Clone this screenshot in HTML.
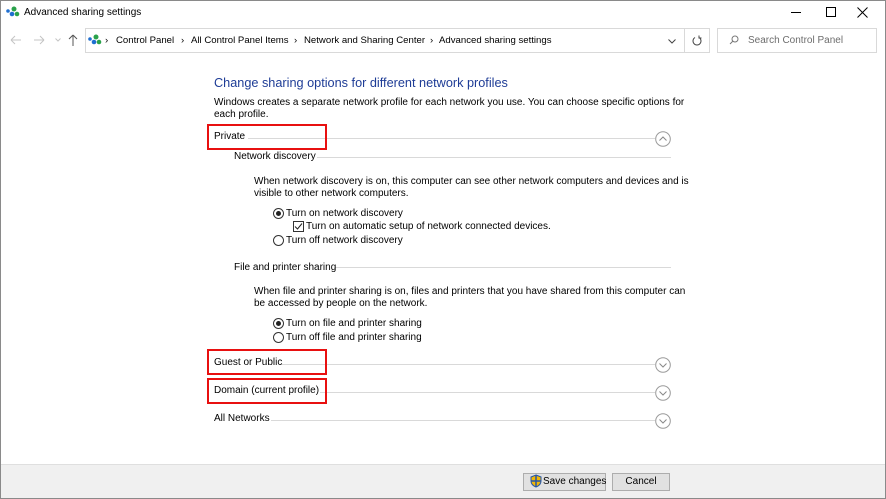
<!DOCTYPE html>
<html><head><meta charset="utf-8"><style>
*{margin:0;padding:0;box-sizing:border-box}
body{width:886px;height:499px;overflow:hidden;background:#fff;font-family:"Liberation Sans",sans-serif;font-size:10px;color:#000;position:relative}
.a{position:absolute;white-space:nowrap;line-height:12px}
.ln{position:absolute;height:1px;background:#d9d9d9}
.rb{position:absolute;border:2px solid #e81010}
.rad{position:absolute;width:11px;height:11px;border:1px solid #333;border-radius:50%;background:#fff}
.btn{position:absolute;height:18px;border:1px solid #adadad;background:#e1e1e1;text-align:center;line-height:16px}
.cv{position:absolute}
.bc{font-size:9.6px}
</style></head><body>
<div style="position:absolute;inset:0;border:1px solid #8a8a8a;pointer-events:none;z-index:5"></div>
<svg class="a" style="left:6px;top:6px" width="14" height="12"><circle cx="2" cy="5" r="1.8" fill="#1f6fd0"/><circle cx="8" cy="3" r="2.5" fill="#2aa24a"/><circle cx="6" cy="8" r="2.3" fill="#1f6fd0"/><circle cx="11" cy="8" r="2.3" fill="#2aa24a"/></svg>
<div class="a" style="left:24px;top:7px">Advanced sharing settings</div>
<svg class="cv" style="left:790px;top:6px" width="12" height="12"><path d="M1 6.5H11" stroke="#000"/></svg>
<div style="position:absolute;left:826px;top:7px;width:10px;height:10px;border:1px solid #000"></div>
<svg class="cv" style="left:857px;top:7px" width="11" height="11"><path d="M0.5 0.5L10.5 10.5M10.5 0.5L0.5 10.5" stroke="#000"/></svg>
<svg class="cv" style="left:10px;top:35px" width="12" height="10"><path d="M1 5H11M1 5L5 1M1 5L5 9" stroke="#c4c4c4" fill="none"/></svg>
<svg class="cv" style="left:33px;top:35px" width="12" height="10"><path d="M1 5H11M11 5L7 1M11 5L7 9" stroke="#c4c4c4" fill="none"/></svg>
<svg class="cv" style="left:55px;top:38px" width="6" height="4"><path d="M0.5 0.5L3 3L5.5 0.5" stroke="#c4c4c4" fill="none"/></svg>
<svg class="cv" style="left:68px;top:34px" width="10" height="12"><path d="M5 1V12M5 1L1 5M5 1L9 5" stroke="#555" fill="none"/></svg>
<div style="position:absolute;left:85px;top:28px;width:600px;height:25px;border:1px solid #d9d9d9"></div>
<div style="position:absolute;left:684px;top:28px;width:26px;height:25px;border:1px solid #d9d9d9"></div>
<svg class="a" style="left:88px;top:34px" width="14" height="12"><circle cx="2" cy="5" r="1.8" fill="#1f6fd0"/><circle cx="8" cy="3" r="2.5" fill="#2aa24a"/><circle cx="6" cy="8" r="2.3" fill="#1f6fd0"/><circle cx="11" cy="8" r="2.3" fill="#2aa24a"/></svg>
<div class="a bc" style="left:105px;top:35px">›</div>
<div class="a bc" style="left:116px;top:35px">Control Panel</div>
<div class="a bc" style="left:181px;top:35px">›</div>
<div class="a bc" style="left:191px;top:35px">All Control Panel Items</div>
<div class="a bc" style="left:294px;top:35px">›</div>
<div class="a bc" style="left:304px;top:35px">Network and Sharing Center</div>
<div class="a bc" style="left:430px;top:35px">›</div>
<div class="a bc" style="left:439px;top:35px">Advanced sharing settings</div>
<svg class="cv" style="left:668px;top:39px" width="8" height="5"><path d="M0.5 0.5L4 4L7.5 0.5" stroke="#444" fill="none"/></svg>
<svg class="cv" style="left:692px;top:35px" width="10" height="11"><path d="M3 2.5A4 4 0 1 0 7 2.5M7 0.5V3H9.5" stroke="#444" fill="none"/></svg>
<div style="position:absolute;left:717px;top:28px;width:160px;height:25px;border:1px solid #d9d9d9"></div>
<svg class="cv" style="left:729px;top:35px" width="10" height="10"><circle cx="6" cy="4" r="3" stroke="#777" fill="none"/><path d="M4 6L1 9" stroke="#777"/></svg>
<div class="a" style="left:748px;top:35px;color:#6d6d6d">Search Control Panel</div>
<div class="a" style="left:214px;top:76px;font-size:12.7px;line-height:15px;color:#1e3c96">Change sharing options for different network profiles</div>
<div class="a" style="left:214px;top:97px">Windows creates a separate network profile for each network you use. You can choose specific options for</div>
<div class="a" style="left:214px;top:109px">each profile.</div>
<div class="ln" style="left:248px;top:138px;width:407px"></div>
<div class="a" style="left:214px;top:131px">Private</div>
<svg class="cv" style="left:655px;top:131px" width="16" height="16"><circle cx="8" cy="8" r="7.3" stroke="#9a9a9a" fill="#fff"/><path d="M4.5 9.5L8 6L11.5 9.5" stroke="#888" fill="none"/></svg>
<div class="rb" style="left:207px;top:124px;width:120px;height:26px"></div>
<div class="ln" style="left:317px;top:157px;width:354px"></div>
<div class="a" style="left:234px;top:151px">Network discovery</div>
<div class="a" style="left:254px;top:176px">When network discovery is on, this computer can see other network computers and devices and is</div>
<div class="a" style="left:254px;top:188px">visible to other network computers.</div>
<div class="rad" style="left:273px;top:208px"></div><div style="position:absolute;left:276px;top:211px;width:5px;height:5px;border-radius:50%;background:#222"></div>
<div class="a" style="left:286px;top:208px">Turn on network discovery</div>
<div style="position:absolute;left:293px;top:221px;width:11px;height:11px;border:1px solid #333"></div>
<svg class="cv" style="left:294px;top:222px" width="9" height="9"><path d="M1 4.5L3.5 7L8 1.5" stroke="#222" fill="none"/></svg>
<div class="a" style="left:306px;top:221px">Turn on automatic setup of network connected devices.</div>
<div class="rad" style="left:273px;top:235px"></div>
<div class="a" style="left:286px;top:235px">Turn off network discovery</div>
<div class="ln" style="left:334px;top:267px;width:337px"></div>
<div class="a" style="left:234px;top:262px">File and printer sharing</div>
<div class="a" style="left:254px;top:286px">When file and printer sharing is on, files and printers that you have shared from this computer can</div>
<div class="a" style="left:254px;top:298px">be accessed by people on the network.</div>
<div class="rad" style="left:273px;top:318px"></div><div style="position:absolute;left:276px;top:321px;width:5px;height:5px;border-radius:50%;background:#222"></div>
<div class="a" style="left:286px;top:318px">Turn on file and printer sharing</div>
<div class="rad" style="left:273px;top:332px"></div>
<div class="a" style="left:286px;top:332px">Turn off file and printer sharing</div>
<div class="ln" style="left:282px;top:364px;width:373px"></div>
<div class="a" style="left:214px;top:357px">Guest or Public</div>
<svg class="cv" style="left:655px;top:357px" width="16" height="16"><circle cx="8" cy="8" r="7.3" stroke="#9a9a9a" fill="#fff"/><path d="M4.5 6.5L8 10L11.5 6.5" stroke="#888" fill="none"/></svg>
<div class="rb" style="left:207px;top:349px;width:120px;height:26px"></div>
<div class="ln" style="left:320px;top:392px;width:335px"></div>
<div class="a" style="left:214px;top:385px">Domain (current profile)</div>
<svg class="cv" style="left:655px;top:385px" width="16" height="16"><circle cx="8" cy="8" r="7.3" stroke="#9a9a9a" fill="#fff"/><path d="M4.5 6.5L8 10L11.5 6.5" stroke="#888" fill="none"/></svg>
<div class="rb" style="left:207px;top:378px;width:120px;height:26px"></div>
<div class="ln" style="left:271px;top:420px;width:384px"></div>
<div class="a" style="left:214px;top:413px">All Networks</div>
<svg class="cv" style="left:655px;top:413px" width="16" height="16"><circle cx="8" cy="8" r="7.3" stroke="#9a9a9a" fill="#fff"/><path d="M4.5 6.5L8 10L11.5 6.5" stroke="#888" fill="none"/></svg>
<div style="position:absolute;left:0;top:464px;width:886px;height:35px;background:#f0f0f0;border-top:1px solid #dfdfdf"></div>
<div class="btn" style="left:523px;top:473px;width:83px"></div>
<svg class="a" style="left:530px;top:474px" width="12" height="14"><path d="M6 1 L11 3 L11 7 Q11 11 6 13 Q1 11 1 7 L1 3 Z" fill="#f2b705" stroke="#2455a8" stroke-width="1"/><path d="M6 1 L6 13 M1 7 L11 7" stroke="#2455a8" stroke-width="1.5"/></svg>
<div class="a" style="left:543px;top:476px">Save changes</div>
<div class="btn" style="left:612px;top:473px;width:58px">Cancel</div>
</body></html>
